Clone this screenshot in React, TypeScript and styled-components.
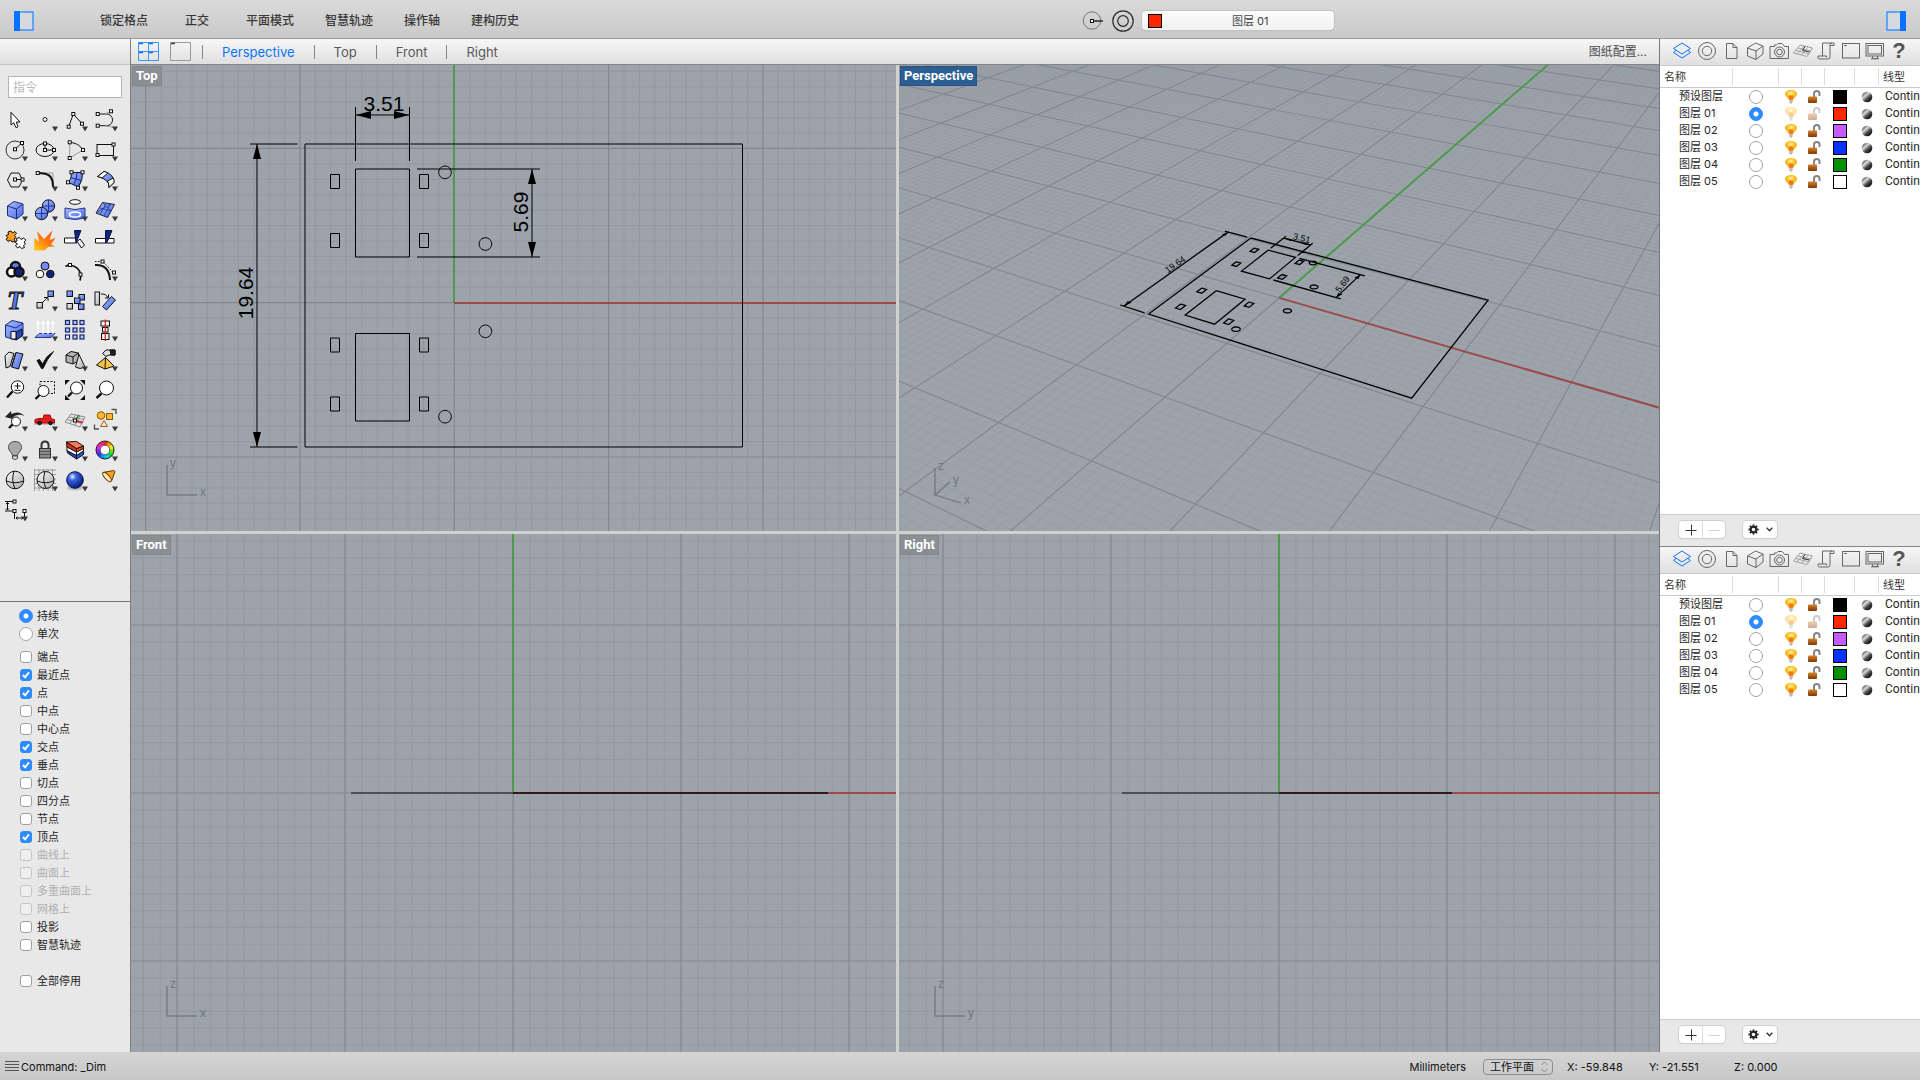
import React, { ReactNode, useState } from "react";
import styled, { createGlobalStyle, css } from "styled-components";

/* ------------------------------------------------------------------ */
/* Theme values                                                        */
/* ------------------------------------------------------------------ */

const blue = "#0a72ff";
const uiFont = `Inter, "Noto Sans CJK SC", sans-serif`;

const GlobalStyle = createGlobalStyle`
  *, *::before, *::after { box-sizing: border-box; }
  body { margin: 0; background: #e8e8e8; }
  button, input, select { font: inherit; color: inherit; margin: 0; }
`;

/* ------------------------------------------------------------------ */
/* Frame                                                               */
/* ------------------------------------------------------------------ */

const Shell = styled.div`
  display: grid;
  grid-template-rows: 39px minmax(0, 1fr) 28px;
  height: 100vh;
  font-family: ${uiFont};
  font-size: 11px;
  color: #262626;
  overflow: hidden;
`;

const Body = styled.div`
  display: grid;
  grid-template-columns: 131px minmax(0, 1fr) 261px;
  min-height: 0;
`;

const PlainButton = styled.button`
  display: flex;
  align-items: center;
  justify-content: center;
  padding: 0;
  border: 0;
  background: none;
  cursor: default;
`;

/* ------------------------------------------------------------------ */
/* Top bar                                                             */
/* ------------------------------------------------------------------ */

const TopBar = styled.header`
  display: grid;
  grid-template-columns: 1081fr auto 585fr;
  align-items: center;
  padding-top: 3px;
  background: linear-gradient(#dadada, #c9c9c9);
  border-bottom: 1px solid #9b9b9b;
`;

const TopLeft = styled.div`
  display: flex;
  align-items: center;
  padding-left: 14px;
`;

const TopCenter = styled.div`
  display: flex;
  align-items: center;
  gap: 8px;
`;

const TopRight = styled.div`
  display: flex;
  justify-content: flex-end;
  padding-right: 14px;
`;

const ModeList = styled.nav`
  display: flex;
  gap: 31px;
  margin-left: 66px;
`;

const ModeButton = styled(PlainButton)`
  min-width: 36px;
  font-size: 12px;
  line-height: 18px;
  font-weight: 500;
  color: #383838;
  white-space: nowrap;
`;

const LayerPicker = styled.label`
  display: flex;
  align-items: center;
  width: 192px;
  height: 19px;
  padding-left: 6px;
  border-radius: 4px;
  background: linear-gradient(#fdfdfd, #f1f1f1);
  box-shadow: 0 0 0 1px #c2c2c2, 0 1px 1px #9f9f9f;
`;

const LayerSelect = styled.select`
  flex: 1;
  appearance: none;
  border: 0;
  background: none;
  padding: 0 0 0 4px;
  font-size: 11px;
  line-height: 18px;
  color: #444;
  text-align-last: center;
`;

const Swatch = styled.span<{ $color: string }>`
  display: block;
  flex: none;
  width: 14px;
  height: 14px;
  border: 1px solid #000;
  background: ${(p) => p.$color};
`;

/* ------------------------------------------------------------------ */
/* Sidebar                                                             */
/* ------------------------------------------------------------------ */

const Sidebar = styled.aside`
  display: flex;
  flex-direction: column;
  min-height: 0;
  background: #e8e8e8;
  border-right: 1px solid #7f7f7f;
`;

const BarStrip = styled.div`
  flex: none;
  height: 26px;
  background: linear-gradient(#f7f7f7, #dfdfdf);
  border-bottom: 1px solid #c4c4c4;
`;

const CommandInput = styled.input`
  flex: none;
  width: auto;
  height: 22px;
  margin: 11px 8px 7px;
  padding: 0 4px;
  border: 1px solid #b4b4b4;
  background: #fff;
  font-size: 12px;
  outline: 0;
  &::placeholder {
    color: #b9b9b9;
  }
`;

const ToolGrid = styled.div`
  display: grid;
  grid-template-columns: repeat(4, 30px);
  grid-auto-rows: 30px;
  flex: none;
  height: 497px;
  border-bottom: 1px solid #777;
`;

const ToolButton = styled(PlainButton)`
  svg {
    display: block;
    overflow: visible;
  }
`;

const SnapList = styled.div`
  display: flex;
  flex-direction: column;
  padding: 5px 0 0 19px;
`;

const SnapGroup = styled.div`
  display: flex;
  flex-direction: column;
  margin-bottom: 5px;
`;

const SnapGroupLast = styled(SnapGroup)`
  margin-top: 13px;
`;

const SnapLabel = styled.label<{ $off?: boolean }>`
  display: flex;
  align-items: center;
  gap: 4px;
  height: 18px;
  line-height: 18px;
  color: ${(p) => (p.$off ? "#b0b0b0" : "#1f1f1f")};
`;

const Radio = styled.input`
  appearance: none;
  flex: none;
  width: 14px;
  height: 14px;
  border-radius: 50%;
  border: 1px solid #a3a3a3;
  background: #fff;
  &:checked {
    border-color: #2e8bff;
    background: radial-gradient(circle, #fff 0 2px, #2e8bff 3px);
  }
`;

const tick = css`
  &:checked {
    border-color: #2e8bff;
    background: #2e8bff;
  }
  &:checked::after {
    content: "";
    width: 4px;
    height: 7px;
    margin-top: -2px;
    border: solid #fff;
    border-width: 0 2px 2px 0;
    transform: rotate(40deg);
  }
`;

const Check = styled.input`
  appearance: none;
  display: flex;
  align-items: center;
  justify-content: center;
  flex: none;
  width: 12px;
  height: 12px;
  && {
    margin: 0 1px;
  }
  border-radius: 3px;
  border: 1px solid #a0a0a0;
  background: #fff;
  &:disabled {
    border-color: #c4c4c4;
    background: #efefef;
  }
  ${tick}
`;

/* ------------------------------------------------------------------ */
/* Workspace                                                           */
/* ------------------------------------------------------------------ */

const Workspace = styled.main`
  display: flex;
  flex-direction: column;
  min-width: 0;
  min-height: 0;
`;

const TabBar = styled.div`
  display: flex;
  align-items: center;
  flex: none;
  height: 26px;
  padding: 0 12px 0 7px;
  background: linear-gradient(#f7f7f7, #dfdfdf);
  border-bottom: 1px solid #858585;
`;

const LayoutButton = styled(PlainButton)`
  width: 21px;
  height: 19px;
  margin-right: 11px;
`;

const Tab = styled(PlainButton)<{ $active?: boolean }>`
  height: 14px;
  padding: 0 19px;
  border-left: 1px solid #858585;
  font-size: 13px;
  line-height: 14px;
  color: ${(p) => (p.$active ? blue : "#595959")};
`;

const LayoutLink = styled(PlainButton)`
  margin-left: auto;
  font-size: 12px;
  line-height: 18px;
  color: #4d4d4d;
`;

const Views = styled.div`
  flex: 1;
  display: grid;
  grid-template-columns: minmax(0, 765fr) minmax(0, 760fr);
  grid-template-rows: minmax(0, 466fr) minmax(0, 518fr);
  gap: 3px;
  min-height: 0;
  background: #d0d2d0;
`;

const View = styled.section`
  position: relative;
  min-width: 0;
  min-height: 0;
  overflow: hidden;
  background: #9da3aa;
`;

const ViewCanvas = styled.svg`
  display: block;
  width: 100%;
  height: 100%;
`;

const ViewTitle = styled.h2<{ $active?: boolean }>`
  position: absolute;
  left: 1px;
  top: 1px;
  margin: 0;
  height: 20px;
  padding: 0 3px;
  font: 700 13px/18px Roboto, sans-serif;
  color: #fff;
  background: ${(p) => (p.$active ? "#2b5e91" : "#8b8f94")};
  border: 1px solid ${(p) => (p.$active ? "#245585" : "#83868b")};
`;

/* ------------------------------------------------------------------ */
/* Layer panels                                                        */
/* ------------------------------------------------------------------ */

const PanelColumn = styled.aside`
  display: flex;
  flex-direction: column;
  min-width: 0;
  min-height: 0;
  border-left: 1px solid #777;
  background: #fff;
`;

const Panel = styled.section<{ $grow: number }>`
  flex: ${(p) => p.$grow} 1 0;
  display: flex;
  flex-direction: column;
  min-height: 0;
  overflow: hidden;
  & + & {
    box-shadow: 0 -1px 0 #858585;
  }
`;

const PanelTabs = styled.div`
  display: flex;
  align-items: center;
  flex: none;
  height: 27px;
  padding: 0 0 2px 11px;
  background: linear-gradient(#f7f7f7, #dfdfdf);
  border-bottom: 1px solid #c9c9c9;
`;

const PanelTab = styled(PlainButton)`
  flex: none;
  width: 24px;
  height: 24px;
`;

const HelpMark = styled.span`
  font: 700 22px/24px "Liberation Sans", sans-serif;
  color: #555;
`;

const LayerScroll = styled.div`
  flex: 1;
  min-height: 0;
  overflow: hidden;
`;

const LayerTable = styled.table`
  table-layout: fixed;
  width: 260px;
  border-collapse: separate;
  border-spacing: 0;
`;

const HeadCell = styled.th`
  height: 22px;
  padding: 0 0 2px 4px;
  border-bottom: 1px solid #cbcbcb;
  font-weight: 400;
  text-align: left;
  color: #333;
  background: linear-gradient(#dcdcdc, #dcdcdc) right 0 center / 1px 17px no-repeat;
  &:last-child {
    background: none;
  }
`;

const Cell = styled.td<{ $indent?: number }>`
  height: 17px;
  padding: 0 0 0 ${(p) => p.$indent || 0}px;
  line-height: 17px;
  white-space: nowrap;
  overflow: hidden;
  color: #262626;
`;

const LinetypeCell = styled(Cell)`
  font-family: Roboto, sans-serif;
  font-size: 12px;
`;

const CellCenter = styled.div<{ $dim?: boolean }>`
  display: flex;
  align-items: center;
  justify-content: center;
  height: 17px;
  opacity: ${(p) => (p.$dim ? 0.4 : 1)};
`;

const PanelFooter = styled.footer`
  display: flex;
  align-items: flex-start;
  gap: 18px;
  flex: none;
  height: 33px;
  padding: 6px 0 0 19px;
  background: #e8e8e8;
  border-top: 1px solid #cdcdcd;
`;

const Segment = styled.div`
  display: flex;
  height: 17px;
  border-radius: 4px;
  background: #fff;
  box-shadow: 0 0 0 1px #d0d0d0, 0 1px 1px #b5b5b5;
`;

const SegmentButton = styled(PlainButton)<{ $wide?: boolean }>`
  width: ${(p) => (p.$wide ? 34 : 23)}px;
  gap: 7px;
  & + & {
    border-left: 1px solid #dedede;
  }
`;

/* ------------------------------------------------------------------ */
/* Status bar                                                          */
/* ------------------------------------------------------------------ */

const StatusBar = styled.footer`
  display: flex;
  align-items: center;
  padding: 1px 0 0 5px;
  background: linear-gradient(#d4d4d4, #c8c8c8);
  color: #111;
`;

const StatusCommand = styled.span`
  margin: 0 auto 0 2px;
`;

const PlaneBox = styled.div`
  position: relative;
  display: flex;
  align-items: center;
  margin: 0 14px 0 17px;
`;

const PlaneSelect = styled.select`
  appearance: none;
  width: 70px;
  height: 16px;
  padding: 0 0 0 6px;
  border: 1px solid #8d8d8d;
  border-radius: 4px;
  background: transparent;
  font-size: 11px;
  line-height: 14px;
`;

const PlaneArrows = styled.svg`
  position: absolute;
  right: 5px;
  pointer-events: none;
`;

const Coordinate = styled.output<{ $width: number }>`
  width: ${(p) => p.$width}px;
  white-space: nowrap;
`;

/* ------------------------------------------------------------------ */
/* Icon helpers                                                        */
/* ------------------------------------------------------------------ */

const Defs = () => (
  <svg width="0" height="0" aria-hidden="true" display="block">
    <defs>
      <linearGradient id="gBlue" x1="0" y1="0" x2="1" y2="1">
        <stop offset="0" stopColor="#a9bcff" />
        <stop offset="1" stopColor="#4668e6" />
      </linearGradient>
      <linearGradient id="gGrey" x1="0" y1="0" x2="1" y2="1">
        <stop offset="0" stopColor="#fdfdfd" />
        <stop offset="1" stopColor="#a9a9a9" />
      </linearGradient>
      <linearGradient id="gFire" x1="1" y1="0" x2="0" y2="1">
        <stop offset="0" stopColor="#ff4a00" />
        <stop offset=".5" stopColor="#ff7a10" />
        <stop offset="1" stopColor="#ffd21e" />
      </linearGradient>
      <radialGradient id="gBall" cx=".35" cy=".3" r=".75">
        <stop offset="0" stopColor="#e6f0ff" />
        <stop offset=".3" stopColor="#3a66e0" />
        <stop offset="1" stopColor="#04156e" />
      </radialGradient>
      <linearGradient id="gDark" x1=".1" y1=".1" x2=".8" y2=".9">
        <stop offset="0" stopColor="#4a4a4a" />
        <stop offset=".35" stopColor="#d8d8d8" />
        <stop offset=".65" stopColor="#4a4a4a" />
        <stop offset="1" stopColor="#0d0d0d" />
      </linearGradient>
      <radialGradient id="gBulb" cx=".5" cy=".35" r=".6">
        <stop offset="0" stopColor="#fff3a0" />
        <stop offset=".5" stopColor="#ffc62b" />
        <stop offset="1" stopColor="#f39a10" />
      </radialGradient>
      <linearGradient id="gLock" x1="0" y1="0" x2="0" y2="1">
        <stop offset="0" stopColor="#d9822c" />
        <stop offset="1" stopColor="#7d3805" />
      </linearGradient>
    </defs>
  </svg>
);

const Sq = ({ x, y, s = 3 }: { x: number; y: number; s?: number }) => (
  <rect x={x - s / 2} y={y - s / 2} width={s} height={s} fill="#fff" stroke="#111" strokeWidth="1" />
);

const Icon = ({ children, menu }: { children: ReactNode; menu?: boolean }) => (
  <svg width="24" height="24" viewBox="0 0 24 24" fill="none" stroke="#111" strokeWidth="1" aria-hidden="true">
    {children}
    {menu && <path d="M19 18.500h6l-3 5z" fill="#3a3a3a" stroke="none" />}
  </svg>
);

const G = "#9a9a9a";
const B = "url(#gBlue)";
const W = "url(#gGrey)";

type Tool = { name: string; menu?: boolean; art: ReactNode };

const tools: Tool[] = [
  { name: "选取", art: <path d="M8 4.300V17l2.700-2.300L13 19.700l2-1L13.300 14H17z" fill="#fff" /> },
  { name: "点", menu: true, art: <circle cx="12" cy="11.500" r="2" fill="#fff" /> },
  { name: "多重直线", menu: true, art: <><path d="M5.700 18.700 10.300 6 19 15.700" /><Sq x={5.700} y={18.700} /><Sq x={10.300} y={6} /><Sq x={19} y={15.700} /></> },
  { name: "曲线", menu: true, art: <><path d="M4.700 6H12c10-1 10 13 0 11.700H4.700" /><path d="M12 6l6-3M12 17.700l8 1.500" stroke={G} /><Sq x={4.700} y={6} /><Sq x={18} y={3.300} /><Sq x={4.700} y={17.700} /></> },

  { name: "圆", menu: true, art: <><circle cx="12" cy="12" r="9" stroke="#333" /><path d="m12 11 7-6" /><Sq x={12} y={11.300} /><Sq x={19} y={5} /></> },
  { name: "椭圆", menu: true, art: <><ellipse cx="12" cy="12" rx="9" ry="6.500" /><path d="M12 12V5.500M12 12h9" /><Sq x={12} y={12} /><Sq x={12} y={5.500} /><Sq x={21} y={12} /></> },
  { name: "圆弧", menu: true, art: <><path d="M6.700 20V4.300M6.700 20 20 12" stroke={G} /><path d="M6.700 4.300Q16 5 20 12" /><Sq x={6.700} y={4.300} /><Sq x={6.700} y={20} /><Sq x={20} y={12} /></> },
  { name: "矩形", menu: true, art: <><rect x="4" y="6.500" width="16.500" height="11" /><Sq x={20.500} y={6.500} /><Sq x={4.500} y={17} /></> },

  { name: "多边形", menu: true, art: <><path d="M4.500 12 8 5h8l3.500 7-3.500 7H8z" /><path d="M12 11.500h7" /><Sq x={12} y={11.500} /><Sq x={19.500} y={11.500} /></> },
  { name: "曲线圆角", menu: true, art: <><path d="M4.700 5H20v14" stroke={G} /><path d="M4.700 5C16 5 20 8 20 19" strokeWidth="2" /><Sq x={4.700} y={5} /></> },
  { name: "曲面", menu: true, art: <><path d="M8.500 4.500h11Q20 12 15.500 19L5.500 14.500Q9 10 8.500 4.500z" fill={B} /><path d="M14 4.500q0 7-3.500 12.300M7.500 9.500l11 3" stroke="#1a2c86" /><Sq x={8.500} y={4.300} /><Sq x={19.500} y={4.300} /><Sq x={5} y={14.300} /><Sq x={15} y={19.700} /></> },
  { name: "曲面编辑", menu: true, art: <><path d="M4.500 8.500 11 3.500q10 2.500 10 11L16 19.500q1-8-11.500-11z" fill={B} /><path d="M4.500 8.500 11 3.500q2.500.500 4 1.500L9 10q-2-1-4.500-1.500z" fill="#fff" /><path d="m14.500 13 5.800-3q1 2 .7 4.500L16 19.500q.2-4-1.500-6.500z" fill="#fff" /></> },

  { name: "立方体", menu: true, art: <><path d="M4.500 8 11 3.500l9 2.500v10l-6.500 5-9-3.500z" fill={B} stroke="#1c2d80" /><path d="m4.500 8 9 3v10M13.500 11 20 6" stroke="#1c2d80" /></> },
  { name: "球体", menu: true, art: <><circle cx="15.500" cy="8" r="6.200" fill={B} /><path d="M9.500 8h12M15.500 2v12" stroke="#24368f" /><circle cx="8.500" cy="15.500" r="6.200" fill={B} /><path d="M2.500 15.500h12M8.500 9.500v12" stroke="#24368f" /></> },
  { name: "圆柱", menu: true, art: <><ellipse cx="12" cy="4" rx="5.500" ry="2.300" fill="#fff" /><path d="M2 10q10 3 20 0v10q-10 3-20 0z" fill={B} stroke="#24368f" /><ellipse cx="12" cy="16.500" rx="5.500" ry="2.500" stroke="#fff" strokeWidth="1.500" /></> },
  { name: "网格", menu: true, art: <><path d="M3 15 9.500 4.500 21.500 6.500 14.500 19.500z" fill={B} stroke="#222" /><path d="M6.300 9.800 18 13M7 16.500 13.300 5.200M11 18l6.500-12M3 15l14.500-9M14.500 19.500l3.500-6.500-8.500-8.500" stroke="#24368f" strokeWidth=".8" /></> },

  { name: "插件", art: <><path d="M3 7.500l2.500-1-.5-2.500 3-1 1.500 2 2.500-1.500 1.500 2-2 2 1.500 2-2 1.500 1 2-3 1-1.500-2L5 13.500 3 11l2-1.500z" fill="#ff9d1c" /><path d="M11.500 14l2.500-1-.5-2.500 3-1 1.500 2 2.500-1.500 2.500 2-2 2 1.500 2-2 1.500 1 2-3 1-1.500-2-2.500 1.500-2-2.500 2-1.500z" fill="#fff" /></> },
  { name: "炸开", art: <path d="M1 22.500 1.500 10l4.500 4L4 3l7 8L19.500 2.500l-3 9.500 6-2-4.500 6.500 4 2-7 .5-3.500 3.500z" fill="url(#gFire)" stroke="none" /> },
  { name: "修剪", art: <><path d="M1.500 10h12v5h-12z" fill="#fff" /><path d="m14 13.500 3-2.500 4.500 6-3 3z" fill="#eee" /><path d="M11.500 2.500h6.500l-5 12.500z" fill="#12247a" stroke="#0a1550" /></> },
  { name: "分割", art: <><path d="M2.500 10.500h18.500v4.500H2.500z" fill="#fff" /><path d="M12.500 2.500H19l-5 12h-1.500z" fill="#12247a" stroke="#0a1550" /></> },

  { name: "群组", menu: true, art: <><circle cx="12.500" cy="8.500" r="4.500" fill="#5f7ef5" strokeWidth="2.500" /><circle cx="8.500" cy="14" r="4.500" fill="#fff" strokeWidth="2.500" /><circle cx="16" cy="14" r="4.500" fill="#12247a" strokeWidth="2.500" /></> },
  { name: "解散群组", art: <><circle cx="12" cy="8" r="4" fill="#6f8cf8" /><circle cx="7" cy="16" r="3.800" fill="#fff" /><circle cx="17.300" cy="16" r="3.800" fill="#12247a" /></> },
  { name: "编辑点", art: <><path d="M2.500 8.500Q6 6.500 9 7.500q7.500 2 8.500 9 .5 3-.5 6" strokeWidth="1.800" /><Sq x={7} y={7} /><Sq x={17.500} y={16.500} /></> },
  { name: "控制点", menu: true, art: <><path d="M2 7q14-1 15 15" strokeWidth="2" /><path d="M2 3.500h8L20 14.500" strokeDasharray="1.500 1.500" /><Sq x={9.500} y={3.500} /><Sq x={21} y={14.500} /></> },

  { name: "文字", art: <text x="12" y="21" fontFamily="Liberation Serif, serif" fontSize="26" fontWeight="700" fontStyle="italic" textAnchor="middle" fill="#5a7cf2">T</text> },
  { name: "缩放物件", menu: true, art: <><path d="m8 16 7-7m-4 .500h4V13" /><rect x="4" y="14.500" width="5.500" height="5.500" fill={W} /><rect x="15" y="3" width="5.500" height="5.500" fill={B} /></> },
  { name: "复制", art: <><rect x="4" y="3" width="5.500" height="5.500" fill={B} /><rect x="16" y="6.500" width="5.500" height="5.500" fill={B} /><rect x="11.500" y="10" width="5.500" height="5.500" fill={B} /><rect x="4" y="15.500" width="5.500" height="5.500" fill={W} /><rect x="15.500" y="16" width="5.500" height="5.500" fill={B} /></> },
  { name: "旋转", art: <><rect x="2" y="4" width="4.500" height="13" fill={W} /><path d="M8 6q5-.5 7 4m.5-3.500V10H12" /><path d="m9.500 18.500 9-10 4 3.500-9 10z" fill={B} /></> },

  { name: "布尔运算", menu: true, art: <><path d="M2.500 7 9 2.500l11 2.500v12l-7 5-10.500-3z" fill={B} stroke="#1c2d80" /><path d="m2.500 7 10.500 3 7-5" stroke="#1c2d80" /><path d="M13 22v-8l6-3v7z" fill="#2a47c8" /><path d="M8 13.500h5V21H8z" fill="#eee" /></> },
  { name: "挤出", menu: true, art: <><path d="m2 19.500 4-4h16l-4 4z" fill={B} stroke="#24368f" /><path d="M5 16V4m5 12V4m5 12V4m5 12V4M3.500 6 5 3.500 6.500 6m2 0L10 3.500 11.500 6m2 0L15 3.500 16.500 6m2 0L20 3.500 21.500 6" stroke="#fff" strokeWidth="1.300" /></> },
  { name: "阵列", art: <>{[4.500, 12, 19].map((y) => [4.500, 12, 19].map((x) => <rect key={`${x}-${y}`} x={x - 2} y={y - 2} width="4" height="4" fill={x === 4.5 && y === 19 ? "#fff" : "#b3c4ff"} stroke="#16276e" strokeWidth="1.200" />))}</> },
  { name: "对齐", menu: true, art: <><rect x="8" y="3" width="8.500" height="5" fill="#eee" /><rect x="9.500" y="9.500" width="5.500" height="4.500" fill="#eee" /><rect x="8.500" y="15.500" width="7.500" height="6" fill="#eee" /><path d="M12.300 1.500V23" stroke="#e01818" strokeWidth="1.200" /></> },

  { name: "变形", menu: true, art: <><path d="m2 8 4-4 5 1.500-4 13L3 20z" fill={W} /><path d="m13 4.500 7 1.500-4.500 15-7-2z" fill={B} /><path d="M13 4.500 8.500 19" /></> },
  { name: "检查", menu: true, art: <path d="M4 12.500 6.500 11.500 9.500 16Q13 8 20.500 3.500 14 11 10 20.500H8.500z" fill="#111" /> },
  { name: "实体", menu: true, art: <><path d="m3 7 5-3.500 7.500 1.500v8l-5.500 3-7-2z" fill="#b5b5b5" /><path d="m3 7 7 2 5.500-4M10 9v7" /><path d="m16 6.500 6 12.500q-5 3-9.500 0z" fill={W} /></> },
  { name: "出图", menu: true, art: <><path d="m3.500 17 9-7.500 8.500 8.500-9 3z" fill="#f5c542" /><path d="m12.500 9.500-.5 11.500" /><path d="M9.500 5.500 13 2h9v5h-6l-3 1.500z" fill="#ddd" /><path d="M17 2h5v5h-4z" fill="#222" /></> },

  { name: "缩放", art: <><circle cx="14.500" cy="9" r="6.200" fill="#fff" /><path d="M9.500 13.500 4 19.500" strokeWidth="2.400" /><path d="M11.500 8h6m-3-3v6m-3 1.300h6" /></> },
  { name: "框选缩放", art: <><rect x="7" y="3.500" width="14.500" height="12" strokeDasharray="2 1.500" /><circle cx="10.500" cy="13" r="5.500" fill="#fff" /><path d="m6.500 17-4 4" strokeWidth="2.400" /></> },
  { name: "最大化缩放", art: <><circle cx="13.500" cy="10" r="6" fill="#fff" /><path d="m9 14.500-4 4" strokeWidth="2.400" /><path d="M2 2h5L2 7zM22 2h-5l5 5zM2 22h5l-5-5zM22 22h-5l5-5z" fill="#111" stroke="none" /></> },
  { name: "选取缩放", art: <><circle cx="13.500" cy="10" r="7" fill="#fff" /><path d="m8.500 15.500-5 4.500" strokeWidth="2.400" /></> },

  { name: "复原视图", menu: true, art: <><path d="M2 9 8 3l.5 3Q16 2 21.500 8q-7-3-12 1.500l2 2z" fill="#222" stroke="none" /><circle cx="13" cy="13.500" r="4.500" fill="#fff" /><path d="M9.500 16.500 6 20" strokeWidth="2.400" /></> },
  { name: "显示模式", menu: true, art: <><path d="M1 16h21" stroke="#999" /><path d="M2 11.500q4-1.500 8-1l1-3.500h6l1.500 4 3 .5v3.500H2z" fill="#e81c1c" stroke="#a30808" /><circle cx="6.500" cy="15" r="1.800" fill="#222" /><circle cx="17.500" cy="15" r="1.800" fill="#222" /></> },
  { name: "工作平面", menu: true, art: <><path d="m2 14 6-8 14 3-5 10zM4 11.500l15 4M6 9l15 2.500M7 15.500l5.500-8.500M12 17l5-9" stroke="#8a8a8a" /><path d="M12 12.500 16 7" stroke="#1c9c2c" strokeWidth="1.500" /><path d="m12 12.500 8 2" stroke="#d91a1a" strokeWidth="1.500" /><Sq x={12} y={12.500} /></> },
  { name: "选取物件", menu: true, art: <><path d="M18.500 1.500H23V6M1.500 16.500V21H6" stroke="#555" strokeWidth="1.400" /><circle cx="8" cy="7.500" r="3.800" fill="#ffb52e" stroke="#8a5a00" /><rect x="13.500" y="5.500" width="6" height="6" fill="#ffb52e" stroke="#8a5a00" /><path d="m11 12.500 3.500 6h-7z" stroke="#b05a1a" /></> },

  { name: "显示隐藏", menu: true, art: <><path d="M12 3.500c-4.500 0-6.500 3-6.500 6 0 3.500 3.500 4.500 4 8h5c.5-3.500 4-4.500 4-8 0-3-2-6-6.500-6z" fill="#a9a9a9" stroke="#444" /><path d="M9.500 18h5v2.500l-2.500 1-2.500-1z" fill="#e0e0e0" stroke="#444" /></> },
  { name: "锁定", menu: true, art: <><path d="M8.500 11V7q0-3.500 3.500-3.500T15.500 7v4" strokeWidth="2" stroke="#333" /><rect x="6.500" y="10.500" width="11" height="9.500" fill="#8c8c8c" stroke="#333" /><path d="M7 13.500h10M7 16.500h10" stroke="#555" /></> },
  { name: "图层", menu: true, art: <><path d="m4 12 9.500 5.500V21L4.500 15z" fill="#1a3fc0" /><path d="M13.500 17.500 20.500 13v3.500l-7 4.500z" fill="#2a55e0" /><path d="m4 8.500 9.500 5.500v3.500L4 12.500zM13.500 14l7-4v3l-7 4.500z" fill="#fff" /><path d="M3.500 4 13.500 10.500V14L4 9z" fill="#d83014" /><path d="M13.500 10.500 20.500 8v2.500l-7 3.500z" fill="#ea3a1c" /><path d="M3.500 4l10-.5 7 4.500-7 2.500z" fill="#ff7a5a" /></> },
  {
    name: "颜色",
    menu: true,
    art: (
      <>
        {["#ff2020", "#ff9a00", "#f2f200", "#62e010", "#00d060", "#00d8d8", "#0090ff", "#3030ff", "#9a20ff", "#f020e0", "#ff2080"].map((c, i) => {
          const a = (i * Math.PI * 2) / 11 - 1.8;
          const b = a + (Math.PI * 2) / 11 + 0.05;
          return <path key={c} d={`M${12 + 7 * Math.cos(a)} ${12 + 7 * Math.sin(a)}A7 7 0 0 1 ${12 + 7 * Math.cos(b)} ${12 + 7 * Math.sin(b)}`} stroke={c} strokeWidth="4" />;
        })}
        <circle cx="12" cy="12" r="9" strokeWidth="1" stroke="#222" />
        <circle cx="12" cy="12" r="4.800" fill="#fff" stroke="#555" />
      </>
    ),
  },

  { name: "线框模式", art: <><circle cx="12" cy="12" r="8.800" fill={W} /><path d="M3.500 13q8.500 3.500 17 0M11 3.300q-3 9 1 17.500" /></> },
  { name: "着色模式", menu: true, art: <><path d="M1.500 1v22M6 1v22M10.500 1v22M15 1v22M19.500 1v22M1 2h22M1 6.500h22M1 11h22M1 15.500h22M1 20h22" stroke="#8c8c8c" strokeWidth=".8" /><circle cx="12.500" cy="12" r="8.500" fill={W} /><path d="M4.500 13q8 3.500 16 0M12 3.500q-3 9 1 17" /></> },
  { name: "渲染", menu: true, art: <><ellipse cx="12" cy="20" rx="8" ry="2.500" fill="#bdbdbd" stroke="none" /><circle cx="12" cy="12" r="8.300" fill="url(#gBall)" stroke="#02104f" /></> },
  { name: "聚光灯", menu: true, art: <><path d="M10 4.500 20.500 2.500 22 3.500 18.500 13z" fill="#ff9d1c" stroke="#5a3a00" /><ellipse cx="14" cy="9" rx="2.300" ry="5.800" transform="rotate(-42 14 9)" fill="#ffe9b0" stroke="#5a3a00" /></> },

  { name: "尺寸标注", menu: true, art: <><path d="M2 3.500h9M2 13h9M4.500 4.500v7.500M3 6l1.500-1.500L6 6M3 10.500 4.500 12 6 10.500M11.500 13v8M21.500 13v8M13 20h7M14.500 18.500 13 20l1.500 1.500M18.500 18.500 20 20l-1.500 1.500" /><Sq x={11.500} y={3.500} /><Sq x={11.500} y={13} /><Sq x={21.500} y={13} /></> },
];

/* ------------------------------------------------------------------ */
/* Panel icons                                                         */
/* ------------------------------------------------------------------ */

const PanelIcon = ({ children, color = "#666" }: { children: ReactNode; color?: string }) => (
  <svg width="22" height="22" viewBox="0 0 22 22" fill="none" stroke={color} strokeWidth="1" aria-hidden="true">
    {children}
  </svg>
);

const panelTabs: { name: string; art: ReactNode }[] = [
  { name: "图层", art: <PanelIcon color={blue}><path d="m10 3 8.500 5.500L10 14 1.500 8.500z" /><path d="m4 10.500-2.500 2L10 18l8.500-5.500-2.500-2" /></PanelIcon> },
  { name: "属性", art: <PanelIcon><circle cx="11" cy="11" r="8.500" /><circle cx="11" cy="11" r="4.700" /></PanelIcon> },
  { name: "文件", art: <PanelIcon><path d="M6.500 3.500h6.500l4 4v11H6.500zM13 3.500v4h4" /></PanelIcon> },
  { name: "图块", art: <PanelIcon><path d="m3.500 8 8-5 7.500 3v8l-7 5.500-8.500-3.500zM3.500 8l8.500 3 7-5M12 11v8.500" /></PanelIcon> },
  { name: "视图", art: <PanelIcon><path d="M2 6.500h4.500V5h2L10 3.500h4L15.500 5l1 1.500H20.500v12H2z" /><circle cx="11.500" cy="12" r="5" /><circle cx="11.500" cy="12" r="2.800" /></PanelIcon> },
  { name: "工作平面", art: <PanelIcon color="#a2a2a2"><path d="m1.500 13 6.500-8 12.500 3-5.500 8.500zM4 10.500l13 3.500M6 8l13 3M5 14 12 6M9.500 15 16 7" /><path d="m13 6.500-2.500 4 7 1.500" stroke="#333" /></PanelIcon> },
  { name: "脚本", art: <PanelIcon><path d="M6.500 3h11.500v2.500h-4V17q0 2-2 2H3.500q-1.500 0-1.500-1.500V16h8.500v1.500M6.500 3v13M14 5.500V4.500Q14 3 16 3" /></PanelIcon> },
  { name: "图纸", art: <PanelIcon><rect x="2.500" y="3.500" width="17" height="14.500" /><path d="M4.500 5.500h2" stroke="#333" /></PanelIcon> },
  { name: "显示", art: <PanelIcon><rect x="2" y="3.500" width="17.500" height="12.500" /><rect x="4" y="5.500" width="13.500" height="8.500" /><path d="M8.500 16v2.500h5V16M7 18.800h8" /></PanelIcon> },
];

const BulbIcon = () => (
  <svg width="14" height="16" viewBox="0 0 14 16" aria-hidden="true">
    <path d="M7 1C3 1 1 2.800 1 5c0 2.500 3 3.300 3.500 5.500h5C10 8.300 13 7.500 13 5c0-2.200-2-4-6-4z" fill="url(#gBulb)" />
    <path d="M5 6.500h4l-.3 5H5.300z" fill="#ee7a10" />
    <path d="M5.300 11.500h3.400v2L7 15l-1.700-1.500z" fill="#b9b9b9" />
  </svg>
);

const LockIcon = () => (
  <svg width="14" height="16" viewBox="0 0 14 16" fill="none" aria-hidden="true">
    <path d="M7 8V4.500Q7 2 9.700 2T12.500 4.500V7" stroke="#858585" strokeWidth="2" />
    <rect x="1" y="7.500" width="9" height="6.500" rx="1" fill="url(#gLock)" />
  </svg>
);

const BallIcon = () => (
  <svg width="12" height="12" viewBox="0 0 12 12" aria-hidden="true">
    <circle cx="6" cy="6" r="5.300" fill="url(#gDark)" />
  </svg>
);

const layers = [
  { name: "预设图层", color: "#000000" },
  { name: "图层 01", color: "#ff2600" },
  { name: "图层 02", color: "#c55cff" },
  { name: "图层 03", color: "#0433ff" },
  { name: "图层 04", color: "#008f00" },
  { name: "图层 05", color: "#ffffff" },
];

function LayerPanel({ id, grow }: { id: string; grow: number }) {
  const [current, setCurrent] = useState(1);
  return (
    <Panel $grow={grow}>
      <PanelTabs>
        {panelTabs.map((t) => (
          <PanelTab key={t.name} type="button" aria-label={t.name}>
            {t.art}
          </PanelTab>
        ))}
        <PanelTab type="button" aria-label="说明">
          <HelpMark>?</HelpMark>
        </PanelTab>
      </PanelTabs>
      <LayerScroll>
        <LayerTable>
          <colgroup>
            <col width="73" />
            <col width="46" />
            <col width="23" />
            <col width="23" />
            <col width="30" />
            <col width="24" />
            <col />
          </colgroup>
          <thead>
            <tr>
              <HeadCell>名称</HeadCell>
              <HeadCell />
              <HeadCell />
              <HeadCell />
              <HeadCell />
              <HeadCell />
              <HeadCell>线型</HeadCell>
            </tr>
          </thead>
          <tbody>
            {layers.map((layer, i) => (
              <tr key={layer.name}>
                <Cell $indent={19}>{layer.name}</Cell>
                <Cell>
                  <CellCenter>
                    <Radio type="radio" name={id} aria-label={layer.name} checked={current === i} onChange={() => setCurrent(i)} />
                  </CellCenter>
                </Cell>
                <Cell>
                  <CellCenter $dim={current === i}><BulbIcon /></CellCenter>
                </Cell>
                <Cell>
                  <CellCenter $dim={current === i}><LockIcon /></CellCenter>
                </Cell>
                <Cell>
                  <CellCenter><Swatch $color={layer.color} /></CellCenter>
                </Cell>
                <Cell>
                  <CellCenter><BallIcon /></CellCenter>
                </Cell>
                <LinetypeCell $indent={6}>Continuous</LinetypeCell>
              </tr>
            ))}
          </tbody>
        </LayerTable>
      </LayerScroll>
      <PanelFooter>
        <Segment>
          <SegmentButton type="button" aria-label="新增图层">
            <svg width="12" height="12" viewBox="0 0 12 12" stroke="#333" strokeWidth="1"><path d="M.5 6.500h11M6.500.5v11" /></svg>
          </SegmentButton>
          <SegmentButton type="button" aria-label="删除图层">
            <svg width="12" height="12" viewBox="0 0 12 12" stroke="#cfcfcf" strokeWidth="1"><path d="M.5 6.500h11" /></svg>
          </SegmentButton>
        </Segment>
        <Segment>
          <SegmentButton type="button" aria-label="图层选项" $wide>
            <svg width="11" height="11" viewBox="-6 -6 12 12" aria-hidden="true">
              <circle r="3" fill="none" stroke="#222" strokeWidth="2" />
              {[0, 45, 90, 135].map((a) => (
                <path key={a} d="M0-5.500V-3.500M0 3.500V5.500" stroke="#222" strokeWidth="2" transform={`rotate(${a})`} />
              ))}
            </svg>
            <svg width="7" height="5" viewBox="0 0 7 5" fill="none" stroke="#333" strokeWidth="1.300"><path d="M.7.800 3.500 3.800 6.300.800" /></svg>
          </SegmentButton>
        </Segment>
      </PanelFooter>
    </Panel>
  );
}

/* ------------------------------------------------------------------ */
/* Model geometry, in top view drawing coordinates                     */
/* ------------------------------------------------------------------ */

type Pt = [number, number];

const ORIGIN: Pt = [454.3, 302.7];
const SCALE = 15.43;

const box = (x1: number, y1: number, x2: number, y2: number): Pt[] => [[x1, y1], [x2, y1], [x2, y2], [x1, y2], [x1, y1]];
const ring = (cx: number, cy: number, r = 6.3): Pt[] =>
  Array.from({ length: 33 }, (_, i) => [cx + r * Math.cos((i * Math.PI) / 16), cy + r * Math.sin((i * Math.PI) / 16)] as Pt);

const outline: Pt[][] = [
  box(305, 144, 742.5, 447),
  box(355.5, 169, 409.5, 257),
  box(355.5, 333.5, 409.5, 421),
  ...[330.5, 419.5].flatMap((x) => [
    box(x, 174.5, x + 9, 188.5),
    box(x, 233.5, x + 9, 247.5),
    box(x, 338, x + 9, 352),
    box(x, 397, x + 9, 411),
  ]),
  ring(445, 172.3),
  ring(485.4, 244),
  ring(485.4, 331.3),
  ring(445, 416.7),
];

const dimensionLines: Pt[][] = [
  [[250, 144], [297.5, 144]],
  [[250, 447], [297.5, 447]],
  [[257, 144], [257, 447]],
  [[355.5, 107], [355.5, 161]],
  [[409.5, 107], [409.5, 161]],
  [[355.5, 115], [409.5, 115]],
  [[417, 169], [540, 169]],
  [[417, 257], [540, 257]],
  [[532, 169], [532, 257]],
];

const arrowHeads: Pt[][] = [
  [[257, 144], [253, 159], [261, 159], [257, 144]],
  [[257, 447], [253, 432], [261, 432], [257, 447]],
  [[356, 115], [371, 111], [371, 119], [356, 115]],
  [[409, 115], [394, 111], [394, 119], [409, 115]],
  [[532, 169], [528, 184], [536, 184], [532, 169]],
  [[532, 257], [528, 242], [536, 242], [532, 257]],
];

const toPath = (lines: Pt[][]) => lines.map((l) => "M" + l.map(([x, y]) => `${x.toFixed(1)} ${y.toFixed(1)}`).join("L")).join("");

/* Perspective camera: ground plane to view coordinates. */
const project = (x: number, y: number): Pt => {
  const w = 1 - 0.004428557 * x + 0.007487906 * y;
  return [(2.777751 * x + 14.43668 * y + 1279.233) / w, (1.121692 * x - 1.98477 * y + 297.8413) / w];
};

const inPerspective = (lines: Pt[][]): Pt[][] =>
  lines.map((l) => l.map(([x, y]) => project((x - ORIGIN[0]) / SCALE, (ORIGIN[1] - y) / SCALE)));

function perspectiveGrid(step: number, keep: (n: number) => boolean) {
  const lines: Pt[][] = [];
  for (let x = -150; x <= 80; x += step) if (keep(x)) lines.push([project(x, -60), project(x, 150)]);
  for (let y = -60; y <= 150; y += step) if (keep(y)) lines.push([project(-150, y), project(80, y)]);
  return toPath(lines);
}

const MINOR = "#8d9399";
const MAJOR = "#86868f";
const GREEN = "#4b9b4b";
const RED = "#9b4b4b";

type Frame = { x: number; y: number; w: number; h: number };

function FlatGrid({ frame, origin, unit }: { frame: Frame; origin: Pt; unit: number }) {
  const minor: Pt[][] = [];
  const major: Pt[][] = [];
  for (let i = -80; i <= 80; i++) {
    const x = origin[0] + i * unit;
    const y = origin[1] + i * unit;
    const target = i % 10 === 0 ? major : minor;
    if (x > frame.x && x < frame.x + frame.w) target.push([[x, frame.y], [x, frame.y + frame.h]]);
    if (y > frame.y && y < frame.y + frame.h) target.push([[frame.x, y], [frame.x + frame.w, y]]);
  }
  return (
    <>
      <path d={toPath(minor)} stroke={MINOR} strokeWidth="1" opacity=".65" />
      <path d={toPath(major)} stroke={MAJOR} strokeWidth="1.200" />
    </>
  );
}

const Triad = ({ x, y, up, right }: { x: number; y: number; up: string; right: string }) => (
  <g stroke="#7a7d82" strokeWidth="1.600">
    <path d={`M${x} ${y - 30}V${y}H${x + 30}`} />
    <g stroke="none" fill="#74777c" fontFamily="Liberation Sans, sans-serif" fontSize="12" textAnchor="middle">
      <text x={x + 6} y={y - 28}>{up}</text>
      <text x={x + 36} y={y + 1}>{right}</text>
    </g>
  </g>
);

const Canvas = ({ frame, label, children }: { frame: Frame; label: string; children: ReactNode }) => (
  <ViewCanvas viewBox={`${frame.x} ${frame.y} ${frame.w} ${frame.h}`} preserveAspectRatio="xMidYMid slice" fill="none" role="img" aria-label={label}>
    {children}
  </ViewCanvas>
);

function TopView() {
  const frame = { x: 131, y: 65, w: 765, h: 466 };
  return (
    <View>
      <Canvas frame={frame} label="Top">
        <FlatGrid frame={frame} origin={ORIGIN} unit={SCALE} />
        <path d="M454 65V303" stroke={GREEN} strokeWidth="2" />
        <path d="M454 303H896" stroke={RED} strokeWidth="2" />
        <path d={toPath(outline) + toPath(dimensionLines)} stroke="#000" strokeWidth="1" />
        <path d={toPath(arrowHeads)} fill="#000" />
        <g fill="#000" fontFamily="Liberation Sans, sans-serif" fontSize="21" textAnchor="middle">
          <text x="384" y="111">3.51</text>
          <text transform="translate(528 212) rotate(-90)">5.69</text>
          <text transform="translate(253 293) rotate(-90)">19.64</text>
        </g>
        <Triad x={167} y={495} up="y" right="x" />
      </Canvas>
      <ViewTitle>Top</ViewTitle>
    </View>
  );
}

function PerspectiveView() {
  const [ox, oy] = project(0, 0);
  const [gx, gy] = project(0, 120);
  const [rx, ry] = project(60, 0);
  return (
    <View>
      <Canvas frame={{ x: 899, y: 65, w: 760, h: 466 }} label="Perspective">
        <path d={perspectiveGrid(1, (n) => n % 10 !== 0)} stroke={MINOR} strokeWidth="1" opacity=".32" />
        <path d={perspectiveGrid(10, () => true)} stroke={MAJOR} strokeWidth="1.200" />
        <path d={`M${ox} ${oy}L${gx} ${gy}`} stroke={GREEN} strokeWidth="2" />
        <path d={`M${ox} ${oy}L${rx} ${ry}`} stroke={RED} strokeWidth="2" />
        <path d={toPath(inPerspective(outline)) + toPath(inPerspective(dimensionLines))} stroke="#000" strokeWidth="1.300" />
        <path d={toPath(inPerspective(arrowHeads))} fill="#000" />
        <g fill="#000" fontFamily="Liberation Sans, sans-serif" fontSize="9" textAnchor="middle">
          <text transform="translate(1177 267) rotate(-35)">19.64</text>
          <text transform="translate(1345 286) rotate(-54)">5.69</text>
          <text transform="translate(1301 241) rotate(14)">3.51</text>
        </g>
        <path d="M935 468V495L950 482M935 495L961 503" stroke="#74777c" strokeWidth="1.300" />
        <g fill="#74777c" fontFamily="Liberation Sans, sans-serif" fontSize="12" textAnchor="middle">
          <text x="941" y="470">z</text>
          <text x="956" y="484">y</text>
          <text x="967" y="504">x</text>
        </g>
      </Canvas>
      <ViewTitle $active>Perspective</ViewTitle>
    </View>
  );
}

type ElevationProps = { title: string; frame: Frame; originX: number; from: number; to: number; right: string };

function ElevationView({ title, frame, originX, from, to, right }: ElevationProps) {
  const y = 793;
  return (
    <View>
      <Canvas frame={frame} label={title}>
        <FlatGrid frame={frame} origin={[originX, y]} unit={16.8} />
        <path d={`M${originX} ${frame.y}V${y}`} stroke={GREEN} strokeWidth="2" />
        <path d={`M${originX} ${y}H${frame.x + frame.w}`} stroke={RED} strokeWidth="2" />
        <path d={`M${from} ${y}H${originX}`} stroke="#4c4f53" strokeWidth="2" />
        <path d={`M${originX} ${y}H${to}`} stroke="#331818" strokeWidth="2" />
        <Triad x={frame.x + 36} y={1016} up="z" right={right} />
      </Canvas>
      <ViewTitle>{title}</ViewTitle>
    </View>
  );
}

/* ------------------------------------------------------------------ */
/* Sidebar                                                             */
/* ------------------------------------------------------------------ */

const snaps: { name: string; on?: boolean; off?: boolean }[] = [
  { name: "端点" },
  { name: "最近点", on: true },
  { name: "点", on: true },
  { name: "中点" },
  { name: "中心点" },
  { name: "交点", on: true },
  { name: "垂点", on: true },
  { name: "切点" },
  { name: "四分点" },
  { name: "节点" },
  { name: "顶点", on: true },
  { name: "曲线上", off: true },
  { name: "曲面上", off: true },
  { name: "多重曲面上", off: true },
  { name: "网格上", off: true },
  { name: "投影" },
  { name: "智慧轨迹" },
];

function ToolSidebar() {
  return (
    <Sidebar>
      <BarStrip />
      <CommandInput aria-label="指令" placeholder="指令" />
      <ToolGrid>
        {tools.map((t) => (
          <ToolButton key={t.name} type="button" aria-label={t.name}>
            <Icon menu={t.menu}>{t.art}</Icon>
          </ToolButton>
        ))}
      </ToolGrid>
      <SnapList>
        <SnapGroup>
          <SnapLabel><Radio type="radio" name="snap-mode" defaultChecked />持续</SnapLabel>
          <SnapLabel><Radio type="radio" name="snap-mode" />单次</SnapLabel>
        </SnapGroup>
        <SnapGroup>
          {snaps.map((s) => (
            <SnapLabel key={s.name} $off={s.off}>
              <Check type="checkbox" defaultChecked={s.on} disabled={s.off} />
              {s.name}
            </SnapLabel>
          ))}
        </SnapGroup>
        <SnapGroupLast>
          <SnapLabel><Check type="checkbox" />全部停用</SnapLabel>
        </SnapGroupLast>
      </SnapList>
    </Sidebar>
  );
}

/* ------------------------------------------------------------------ */
/* App                                                                 */
/* ------------------------------------------------------------------ */

const PaneIcon = ({ side }: { side: "left" | "right" }) => (
  <svg width="20" height="20" viewBox="0 0 20 20" aria-hidden="true">
    <rect x="1" y="1" width="18" height="18" fill="#d6dade" stroke="#3c94ff" strokeWidth="1.500" />
    <rect x={side === "left" ? 0 : 14} y="0" width="6" height="20" fill={blue} />
  </svg>
);

const modes = ["锁定格点", "正交", "平面模式", "智慧轨迹", "操作轴", "建构历史"];
const tabs = ["Perspective", "Top", "Front", "Right"];

export default function App() {
  return (
    <Shell>
      <GlobalStyle />
      <TopBar>
        <TopLeft>
          <PlainButton type="button" aria-label="左侧栏"><PaneIcon side="left" /></PlainButton>
          <ModeList>
            {modes.map((m) => <ModeButton key={m} type="button">{m}</ModeButton>)}
          </ModeList>
        </TopLeft>
        <TopCenter>
          <PlainButton type="button" aria-label="记录建构历史">
            <svg width="22" height="22" viewBox="0 0 22 22" fill="none">
              <circle cx="10" cy="10.500" r="8.700" stroke="#777" />
              <path d="M11.500 11H21" stroke="#111" strokeWidth="1.300" />
              <rect x="8.500" y="9.500" width="3" height="3" fill="#fff" stroke="#111" />
            </svg>
          </PlainButton>
          <PlainButton type="button" aria-label="属性">
            <svg width="22" height="22" viewBox="0 0 22 22" fill="none" stroke="#2b2b2b" strokeWidth="1.200">
              <circle cx="11" cy="11" r="10.200" />
              <circle cx="11" cy="11" r="5.300" />
            </svg>
          </PlainButton>
          <LayerPicker>
            <Swatch $color="#ff2600" />
            <LayerSelect aria-label="目前图层" defaultValue="图层 01">
              {layers.map((l) => <option key={l.name}>{l.name}</option>)}
            </LayerSelect>
          </LayerPicker>
        </TopCenter>
        <TopRight>
          <PlainButton type="button" aria-label="右侧栏"><PaneIcon side="right" /></PlainButton>
        </TopRight>
      </TopBar>

      <Body>
        <ToolSidebar />
        <Workspace>
          <TabBar>
            <LayoutButton type="button" aria-label="四视图">
              <svg width="21" height="19" viewBox="0 0 21 19" fill="none" stroke="#3c94ff">
                <path d="M.5.500h20v18H.5zM.5 9.500h20M10.500.5v18" />
                <path d="M1 1.500h4M11 1.500h4M1 10.500h4M11 10.500h4" stroke={blue} strokeWidth="1.500" />
              </svg>
            </LayoutButton>
            <LayoutButton type="button" aria-label="单一视图">
              <svg width="21" height="19" viewBox="0 0 21 19" fill="none" stroke="#999">
                <path d="M.5.500h20v18H.5z" />
                <path d="M1 1.500h4" stroke="#444" strokeWidth="1.500" />
              </svg>
            </LayoutButton>
            {tabs.map((t, i) => <Tab key={t} type="button" $active={i === 0}>{t}</Tab>)}
            <LayoutLink type="button">图纸配置...</LayoutLink>
          </TabBar>
          <Views>
            <TopView />
            <PerspectiveView />
            <ElevationView title="Front" frame={{ x: 131, y: 534, w: 765, h: 518 }} originX={513} from={351} to={828} right="x" />
            <ElevationView title="Right" frame={{ x: 899, y: 534, w: 760, h: 518 }} originX={1279} from={1122} to={1452} right="y" />
          </Views>
        </Workspace>
        <PanelColumn>
          <LayerPanel id="layers-upper" grow={508} />
          <LayerPanel id="layers-lower" grow={505} />
        </PanelColumn>
      </Body>

      <StatusBar>
        <svg width="14" height="11" viewBox="0 0 14 11" stroke="#555" aria-hidden="true">
          <path d="M0 .500h14M0 3.500h14M0 6.500h14M0 9.500h14" />
        </svg>
        <StatusCommand>Command: _Dim</StatusCommand>
        <span>Millimeters</span>
        <PlaneBox>
          <PlaneSelect aria-label="工作平面" defaultValue="工作平面">
            <option>工作平面</option>
          </PlaneSelect>
          <PlaneArrows width="7" height="12" viewBox="0 0 7 12" fill="none" stroke="#8a8a8a" aria-hidden="true">
            <path d="M.5 4 3.500 1l3 3M.5 8l3 3 3-3" />
          </PlaneArrows>
        </PlaneBox>
        <Coordinate $width={82}>X: -59.848</Coordinate>
        <Coordinate $width={85}>Y: -21.551</Coordinate>
        <Coordinate $width={186}>Z: 0.000</Coordinate>
      </StatusBar>
      <Defs />
    </Shell>
  );
}
